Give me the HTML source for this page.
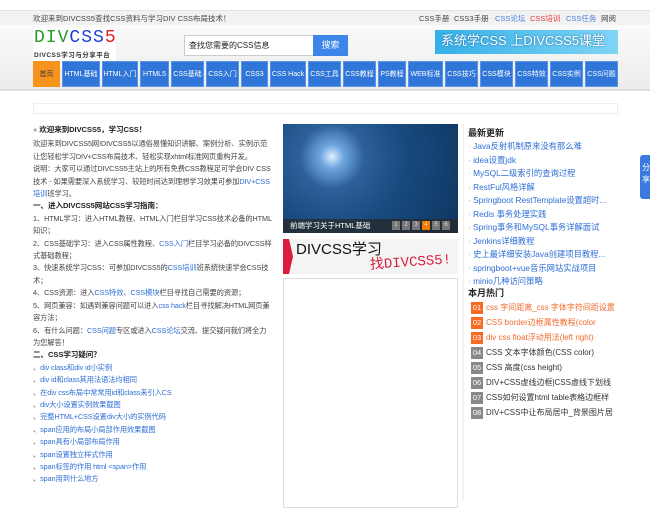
<!DOCTYPE html>
<html><head><meta charset="utf-8">
<style>
*{margin:0;padding:0;box-sizing:border-box}
body{width:650px;height:500px;overflow:hidden;background:#fff;font-family:"Liberation Sans","Noto Sans CJK SC",sans-serif;font-size:10px;color:#333;position:relative}
a{color:#2e6fd6;text-decoration:none}
.abs{position:absolute}
.topbar{left:0;top:10px;width:650px;height:15px;background:#f2f2f2;border-top:1px solid #e4e4e4}
.hdr{left:0;top:25px;width:650px;height:66px;background:linear-gradient(#fafafa,#ececec);border-bottom:2px solid #dcdcdc}
.nav a{position:absolute;top:61px;height:26px;line-height:26px;background:#2f76d8;color:#fff;font-size:7px;text-align:center;border:1px solid #5d95e6;white-space:nowrap;overflow:hidden}
.left{left:33px;top:124px;width:242px;line-height:12.4px;font-size:7.25px;letter-spacing:-0.1px;color:#444;white-space:nowrap;overflow:hidden}
.left b{color:#222;font-size:7.6px}
.rt{left:468px;font-size:8px;}
.rl{left:468px;top:140px;line-height:13.5px;font-size:8.3px}
.rl div:before{content:"· ";color:#aaa}
.hot{left:471px;top:301px;font-size:8px;}
.hot div{height:15px;line-height:13px;margin:0;white-space:nowrap}
.hot span{display:inline-block;width:12px;height:12px;line-height:12px;background:#888;color:#fff;text-align:center;margin-right:3px;font-size:7.5px}
.hot .o span{background:#f96a22}.hot .o{color:#f26b2e}
</style></head><body>
<div class="abs topbar"></div>
<div class="abs" style="left:33px;top:13px;font-size:7.5px;color:#444">欢迎来到DIVCSS5查找CSS资料与学习DIV CSS布局技术！</div>
<div class="abs" style="left:419px;top:13px;font-size:7.5px;color:#444">CSS手册</div>
<div class="abs" style="left:454px;top:13px;font-size:7.5px;color:#444">CSS3手册</div>
<div class="abs" style="left:495px;top:13px;font-size:7.5px;color:#4a7fe0">CSS论坛</div>
<div class="abs" style="left:530px;top:13px;font-size:7.5px;color:#e84040">CSS培训</div>
<div class="abs" style="left:566px;top:13px;font-size:7.5px;color:#4a7fe0">CSS任务</div>
<div class="abs" style="left:601px;top:13px;font-size:7.5px;color:#444">网阅</div>
<div class="abs hdr"></div>
<div class="abs" style="left:33px;top:28px;width:83px;height:38px;background:#fff"></div>
<div class="abs" style="left:34px;top:27px;font-family:'Liberation Mono',monospace;font-size:18px;letter-spacing:1px;line-height:22px"><span style="color:#2a9c2a">DIV</span><span style="color:#1a3fd8">CSS</span><span style="color:#e02020">5</span></div>
<div class="abs" style="left:34px;top:49px;font-size:6.5px;letter-spacing:.5px;color:#333;font-weight:bold">DIVCSS学习与分享平台</div>
<div class="abs" style="left:184px;top:35px;width:130px;height:21px;background:#fff;border:1px solid #ccc;font-size:8px;line-height:19px;padding-left:4px;color:#222">查找您需要的CSS信息</div>
<div class="abs" style="left:313px;top:35px;width:35px;height:21px;background:#3b86e8;color:#fff;font-size:9px;line-height:21px;text-align:center">搜索</div>
<div class="abs" style="left:435px;top:30px;width:183px;height:24px;background:linear-gradient(90deg,#35b0e8,#7fd4f4);color:#fff;font-size:13px;line-height:22px;padding-left:6px;text-shadow:0 0 2px #1a6aa0">系统学CSS 上DIVCSS5课堂</div>
<div class="nav">
<a style="left:33px;width:27px;background:#f7941d;border-color:#f7941d;color:#333">首页</a>
<a style="left:62px;width:38px">HTML基础</a>
<a style="left:102px;width:36px">HTML入门</a>
<a style="left:140px;width:29px">HTML5</a>
<a style="left:171px;width:33px">CSS基础</a>
<a style="left:206px;width:33px">CSS入门</a>
<a style="left:241px;width:27px">CSS3</a>
<a style="left:270px;width:36px">CSS Hack</a>
<a style="left:308px;width:33px">CSS工具</a>
<a style="left:343px;width:33px">CSS教程</a>
<a style="left:378px;width:28px">PS教程</a>
<a style="left:408px;width:35px">WEB标准</a>
<a style="left:445px;width:33px">CSS技巧</a>
<a style="left:480px;width:33px">CSS模块</a>
<a style="left:515px;width:33px">CSS特效</a>
<a style="left:550px;width:33px">CSS实例</a>
<a style="left:585px;width:33px">CSS问题</a>
</div>
<div class="abs" style="left:33px;top:103px;width:585px;height:11px;border:1px solid #eee"></div>
<div class="abs left">
<div><span style="color:#aaa">●</span> <b>欢迎来到DIVCSS5，学习CSS！</b></div>
<div style="margin-top:2px">欢迎来到DIVCSS5网!DIVCSS5以通俗易懂知识讲解、案例分析、实例示范<br>让您轻松学习DIV+CSS布局技术、轻松实现xhtml标准网页重构开发。</div>
<div>说明：大家可以通过DIVCSS5主站上的所有免费CSS教程足可学会DIV CSS<br>技术 - 如果需要深入系统学习、较短时间达到理想学习效果可参加<a>DIV+CSS</a><br><a>培训</a>班学习。</div>
<div><b>一、进入DIVCSS5网站CSS学习指南：</b></div>
<div>1、HTML学习：进入HTML教程、HTML入门栏目学习CSS技术必备的HTML<br>知识；</div>
<div>2、CSS基础学习：进入CSS属性教程、<a>CSS入门</a>栏目学习必备的DIVCSS样<br>式基础教程；</div>
<div>3、快速系统学习CSS：可参加DIVCSS5的<a>CSS培训</a>班系统快速学会CSS技<br>术；</div>
<div>4、CSS资源：进入<a>CSS特效</a>、<a>CSS模块</a>栏目寻找自己需要的资源；</div>
<div>5、网页兼容：如遇到兼容问题可以进入<a>css hack</a>栏目寻找解决HTML网页兼<br>容方法；</div>
<div>6、有什么问题：<a>CSS问题</a>专区或进入<a>CSS论坛</a>交流、提交疑问我们将全力<br>为您解答！</div>
<div><b>二、CSS学习疑问？</b></div>
<div>、<a>div class和div id小实例</a></div>
<div>、<a>div id和class其用法语法均相同</a></div>
<div>、<a>在div css布局中常常用id和class来引入CS</a></div>
<div>、<a>div大小设置实例效果截图</a></div>
<div>、<a>完整HTML+CSS设置div大小的实例代码</a></div>
<div>、<a>span应用的布局小局部作用效果截图</a></div>
<div>、<a>span具有小局部布局作用</a></div>
<div>、<a>span设置独立样式作用</a></div>
<div>、<a>span标签的作用 html &lt;span&gt;作用</a></div>
<div>、<a>span用到什么地方</a></div>
</div>
<div class="abs" style="left:283px;top:124px;width:175px;height:109px;background:radial-gradient(circle at 28% 30%,#dfeeff 0,#6fa6e0 8%,#2d5f9a 22%,#184a7e 50%,#0e3560 100%)"></div>
<div class="abs" style="left:283px;top:219px;width:175px;height:14px;background:rgba(40,40,40,.75);color:#fff;font-size:7.5px;line-height:14px;padding-left:7px">前端学习关于HTML基础</div>
<div class="abs" style="left:392px;top:221px;font-size:6px;color:#ddd;line-height:9px">
<span style="display:inline-block;width:8px;background:#777;text-align:center;margin-right:2px">1</span><span style="display:inline-block;width:8px;background:#777;text-align:center;margin-right:2px">2</span><span style="display:inline-block;width:8px;background:#777;text-align:center;margin-right:2px">3</span><span style="display:inline-block;width:8px;background:#f37c00;text-align:center;margin-right:2px">4</span><span style="display:inline-block;width:8px;background:#777;text-align:center;margin-right:2px">5</span><span style="display:inline-block;width:8px;background:#777;text-align:center">6</span></div>
<div class="abs" style="left:283px;top:239px;width:175px;height:35px;background:#f4f4f4"></div>
<div class="abs" style="left:283px;top:239px;width:10px;height:35px;background:#d81e3c;clip-path:polygon(0 0,60% 0,100% 50%,60% 100%,0 100%)"></div>
<div class="abs" style="left:296px;top:241px;font-size:15px;color:#111;line-height:18px">DIVCSS学习</div>
<div class="abs" style="left:370px;top:255px;font-size:14px;color:#d81e3c;line-height:16px;transform:rotate(-4deg);font-family:'Liberation Mono','Noto Sans CJK SC',monospace">找DIVCSS5!</div>
<div class="abs" style="left:283px;top:278px;width:175px;height:230px;border:1px solid #ddd"></div>
<div class="abs" style="left:463px;top:124px;width:1px;height:376px;background:#eee"></div>
<div class="abs rt" style="top:126px;font-weight:bold;font-size:9px;color:#222">最新更新</div>
<div class="abs rl">
<div><a>Java反射机制原来没有那么难</a></div>
<div><a>idea设置jdk</a></div>
<div><a>MySQL二级索引的查询过程</a></div>
<div><a>RestFul风格详解</a></div>
<div><a>Springboot RestTemplate设置超时...</a></div>
<div><a>Redis 事务处理实践</a></div>
<div><a>Spring事务和MySQL事务详解面试</a></div>
<div><a>Jenkins详细教程</a></div>
<div><a>史上最详细安装Java创建项目教程...</a></div>
<div><a>springboot+vue音乐网站实战项目</a></div>
<div><a>minio几种访问策略</a></div>
</div>
<div class="abs rt" style="top:286px;font-weight:bold;font-size:9px;color:#222">本月热门</div>
<div class="abs hot">
<div class="o"><span>01</span>css 字间距离_css 字体字符间距设置</div>
<div class="o"><span>02</span>CSS border边框属性教程(color</div>
<div class="o"><span>03</span>div css float浮动用法(left right)</div>
<div><span>04</span>CSS 文本字体颜色(CSS color)</div>
<div><span>05</span>CSS 高度(css height)</div>
<div><span>06</span>DIV+CSS虚线边框|CSS虚线下划线</div>
<div><span>07</span>CSS如何设置html table表格边框样</div>
<div><span>08</span>DIV+CSS中让布局居中_背景图片居</div>
</div>
<div class="abs" style="left:640px;top:155px;width:12px;height:44px;background:#3b7be0;border-radius:3px 0 0 3px;color:#fff;font-size:8px;line-height:12px;padding:7px 0 0 2px">分享</div>
</body></html>
